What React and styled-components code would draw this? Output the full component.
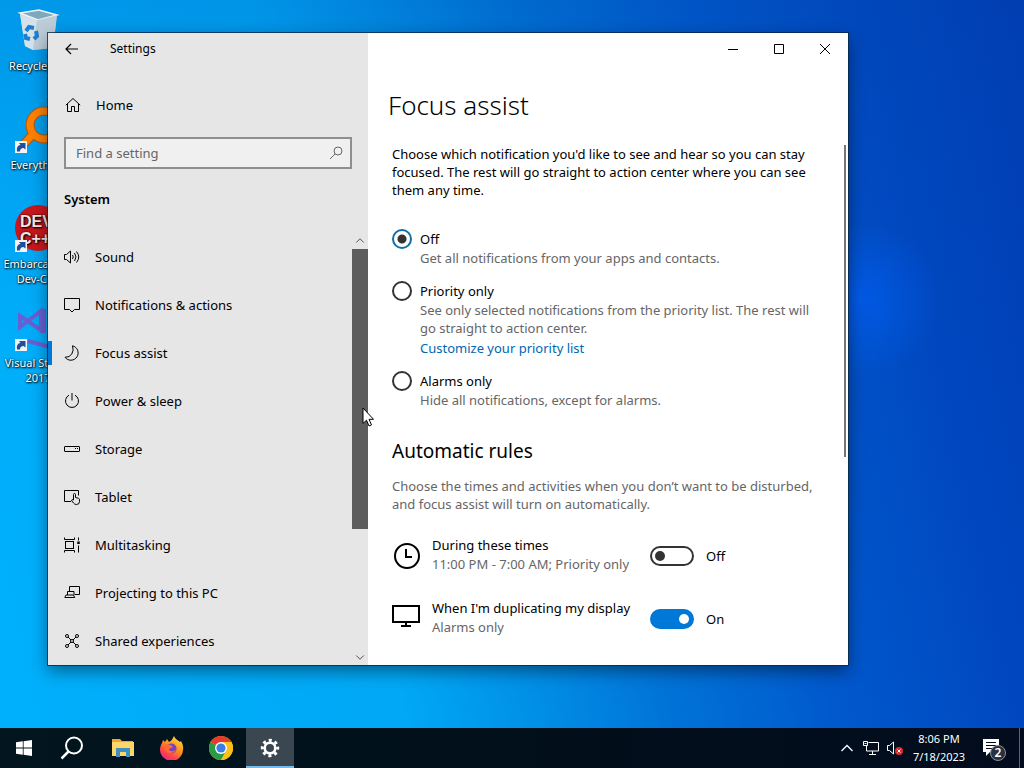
import { useState } from "react";
import styled, { createGlobalStyle } from "styled-components";

const GlobalStyle = createGlobalStyle`
  * {
    box-sizing: border-box;
  }

  body {
    margin: 0;
    font-family: "Noto Sans", "Open Sans", sans-serif;
    font-size: 13px;
    line-height: 18px;
    color: #000;
  }

  button,
  input {
    font: inherit;
    color: inherit;
  }

  svg {
    display: block;
    flex: none;
  }
`;

const Desktop = styled.div`
  position: relative;
  display: flex;
  flex-direction: column;
  height: 100vh;
  overflow: hidden;
  background: radial-gradient(
      circle at 84% 39%,
      rgba(0, 98, 250, 0.6),
      rgba(0, 98, 250, 0) 80px
    ),
    linear-gradient(180deg, rgba(0, 70, 170, 0.2), rgba(0, 70, 170, 0) 45%),
    linear-gradient(
      78deg,
      #00b0fc 0%,
      #00a8f6 35%,
      #0092e8 45%,
      #0074d8 57%,
      #0058cc 72%,
      #0048c0 86%,
      #003cb4 100%
    );
`;

const Shortcuts = styled.div`
  flex: 1;
  display: flex;
  flex-direction: column;
  align-items: flex-start;
  gap: 3px;
  padding: 6px 0;
`;

const Shortcut = styled.button`
  display: flex;
  flex-direction: column;
  align-items: center;
  gap: 4px;
  width: 76px;
  height: 96px;
  padding: 0;
  border: none;
  background: none;
  color: white;
  font-size: 11px;
  line-height: 15px;
  text-shadow: 1px 1px 2px #000, 0 0 2px #000;
`;

const Window = styled.main`
  position: absolute;
  top: 33px;
  right: 176px;
  bottom: 103px;
  left: 48px;
  display: grid;
  grid-template-columns: 320px 1fr;
  background: white;
  outline: 1px solid rgba(10, 40, 70, 0.8);
  box-shadow: 0 6px 16px rgba(0, 0, 0, 0.45);
`;

const Sidebar = styled.aside`
  display: flex;
  flex-direction: column;
  min-height: 0;
  background: #e6e6e6;
`;

const TitleBar = styled.div`
  display: flex;
  align-items: center;
  height: 32px;
  flex: none;
  font-size: 12px;
`;

const BackButton = styled.button`
  display: grid;
  place-items: center;
  width: 48px;
  height: 32px;
  margin-right: 14px;
  padding: 0;
  border: none;
  background: none;
`;

const HomeLink = styled.a`
  display: flex;
  align-items: center;
  gap: 15px;
  height: 48px;
  margin-top: 16px;
  padding-left: 17px;
  color: inherit;
  text-decoration: none;
`;

const SearchBox = styled.label`
  display: flex;
  align-items: center;
  height: 32px;
  margin: 8px 16px 0;
  padding: 0 6px 0 10px;
  border: 2px solid #8e8e8e;
  background: #f0f0f0;
  color: #666;
`;

const SearchInput = styled.input`
  flex: 1;
  min-width: 0;
  padding: 0;
  border: none;
  outline: none;
  background: none;

  &::placeholder {
    color: #666;
    opacity: 1;
  }
`;

const SectionName = styled.h2`
  margin: 0 0 4px;
  padding-left: 16px;
  font-size: 13px;
  font-weight: 600;
  line-height: 60px;
`;

const NavArea = styled.div`
  flex: 1;
  display: flex;
  min-height: 0;
`;

const NavList = styled.nav`
  flex: 1;
  overflow: hidden;
`;

const NavItem = styled.a`
  display: flex;
  align-items: center;
  gap: 15px;
  height: 48px;
  padding-left: 16px;
  background: ${(props) =>
    props.$active
      ? "linear-gradient(#0078d7, #0078d7) left center / 4px 24px no-repeat"
      : "none"};
  color: inherit;
  text-decoration: none;
`;

const ScrollBar = styled.div`
  display: flex;
  flex-direction: column;
  align-items: center;
  justify-content: space-between;
  width: 16px;
`;

const ScrollButton = styled.button`
  display: grid;
  place-items: center;
  width: 16px;
  height: 16px;
  padding: 0;
  border: none;
  background: none;
  color: #222;
`;

const ScrollTrack = styled.div`
  flex: 1;
  width: 100%;
`;

const ScrollThumb = styled.div`
  height: 70%;
  background: #5d5d5d;
`;

const Pane = styled.section`
  display: flex;
  flex-direction: column;
  min-width: 0;
  min-height: 0;
`;

const WindowButtons = styled.div`
  display: flex;
  justify-content: flex-end;
  flex: none;
`;

const WindowButton = styled.button`
  display: grid;
  place-items: center;
  width: 46px;
  height: 32px;
  padding: 0;
  border: none;
  background: none;
`;

const PageTitle = styled.h1`
  margin: 20px 0;
  padding-left: 20px;
  font-size: 26px;
  font-weight: 300;
  line-height: 40px;
`;

const PageArea = styled.div`
  flex: 1;
  display: flex;
  min-height: 0;
`;

const Page = styled.div`
  flex: 1;
  padding: 0 20px 0 24px;
  overflow: hidden;
`;

const PageScroll = styled.div`
  width: 2px;
  height: 60%;
  margin-right: 2px;
  background: #767676;
`;

const Text = styled.p`
  margin: 0;
  color: ${(props) => (props.$muted ? "#666" : "#000")};
`;

const Options = styled.div`
  display: flex;
  flex-direction: column;
  gap: 14px;
  margin-top: 30px;
`;

const Option = styled.div`
  display: grid;
  grid-template-columns: 20px 1fr;
  column-gap: 8px;
`;

const Radio = styled.input`
  appearance: none;
  width: 20px;
  height: 20px;
  margin: 0;
  border: 2px solid #333;
  border-radius: 50%;

  &:checked {
    border-color: #0f6fa8;
    background: radial-gradient(circle, #333 4px, transparent 5px);
  }
`;

const Label = styled.label`
  line-height: 20px;
`;

const OptionBody = styled.div`
  grid-column: 2;
`;

const TextLink = styled.a`
  display: inline-block;
  margin-top: 2px;
  color: #0066b4;
  text-decoration: none;
`;

const SectionTitle = styled.h2`
  margin: 28px 0 12px;
  font-size: 19px;
  font-weight: 400;
  line-height: 28px;
`;

const Rules = styled.div`
  display: flex;
  flex-direction: column;
  gap: 21px;
  margin-top: 22px;
`;

const Rule = styled.div`
  display: grid;
  grid-template-columns: 28px 206px 44px auto;
  justify-content: start;
  align-items: center;
  gap: 12px;
  height: 42px;
`;

const RuleText = styled.div`
  align-self: start;
  white-space: nowrap;
`;

const Toggle = styled.input`
  appearance: none;
  display: flex;
  align-items: center;
  width: 44px;
  height: 20px;
  margin: 0;
  padding: 0 3px;
  border: 2px solid #333;
  border-radius: 10px;

  &::before {
    content: "";
    width: 10px;
    height: 10px;
    border-radius: 50%;
    background: #333;
  }

  &:checked {
    justify-content: flex-end;
    border-color: #0078d7;
    background: #0078d7;
  }

  &:checked::before {
    background: white;
  }
`;

const Taskbar = styled.footer`
  display: flex;
  align-items: stretch;
  height: 40px;
  flex: none;
  background: linear-gradient(90deg, #02161f, #010e1a 60%, #020c1e);
  color: white;
`;

const TaskApps = styled.div`
  display: flex;
  gap: 1px;
  padding-left: 3px;
`;

const TaskButton = styled.button`
  display: grid;
  place-items: center;
  width: 48px;
  padding: 0;
  border: none;
  background: ${(props) => (props.$active ? "#3a4751" : "none")};
  box-shadow: ${(props) => (props.$active ? "inset 0 -2px #76b9ed" : "none")};
`;

const Tray = styled.div`
  display: flex;
  align-items: center;
  margin-left: auto;
`;

const TrayButton = styled.button`
  display: grid;
  place-items: center;
  width: 24px;
  height: 40px;
  padding: 0;
  border: none;
  background: none;
`;

const Clock = styled.button`
  width: 64px;
  padding: 0;
  border: none;
  background: none;
  font-size: 11px;
  line-height: 18px;
`;

const NoticeButton = styled(TrayButton)`
  width: 48px;
`;

const ShowDesktop = styled.button`
  width: 5px;
  height: 40px;
  padding: 0;
  border: none;
  border-left: 1px solid #5a6470;
  background: none;
`;

const Cursor = styled.svg`
  position: absolute;
  top: 407px;
  left: 362px;
`;

function Icon({ size = 16, children }) {
  return (
    <svg
      width={size}
      height={size}
      viewBox="0 0 16 16"
      fill="none"
      stroke="currentColor"
      aria-hidden="true"
    >
      {children}
    </svg>
  );
}

function ShortcutArrow() {
  return (
    <g>
      <rect x="1" y="36" width="12" height="12" fill="#f4f4f4" />
      <path d="M3 46.500q-1-6 3.500-6.500L5 38h6.500v6.500L9.500 43q-3.500 0-3.500 3.500z" fill="#1d4f9c" />
    </g>
  );
}

function RecycleBinIcon() {
  return (
    <svg width="48" height="48" viewBox="0 0 48 48" aria-hidden="true">
      <path d="M6 7l19-3 18 5-4 33-20 2-8-4z" fill="#c3d3dd" />
      <path d="M6 7l19-3 18 5-19 5z" fill="#7fa7be" stroke="#edf4f8" strokeWidth="1.500" />
      <path d="M6 8l5 32 8 4 4-30z" fill="#d6e2ea" />
      <path d="M23 14l20-5-4 33-20 2z" fill="#b9cad6" opacity=".7" />
      <g fill="none" stroke="#1c7fd0" strokeWidth="4">
        <path d="M12 25l3-4 5 1" />
        <path d="M22 25l1 5-3 3" />
        <path d="M16 33l-4-1-1-4" />
      </g>
    </svg>
  );
}

function EverythingIcon() {
  return (
    <svg width="48" height="48" viewBox="0 0 48 48" aria-hidden="true">
      <path d="M19 29L9 40" stroke="#b0560c" strokeWidth="9" />
      <circle cx="30" cy="20" r="14" fill="none" stroke="#b0560c" strokeWidth="9" />
      <circle cx="30" cy="20" r="14" fill="none" stroke="#ff8000" strokeWidth="7" />
      <path d="M20 28L9 40" stroke="#ff8000" strokeWidth="7" />
      <ShortcutArrow />
    </svg>
  );
}

function DevIcon() {
  return (
    <svg width="48" height="48" viewBox="0 0 48 48" aria-hidden="true">
      <circle cx="24" cy="24" r="23" fill="#c8171c" />
      <g fill="#f6e4e4" fontFamily="Liberation Sans" fontWeight="700" fontSize="16">
        <text x="6" y="23">DEV</text>
        <text x="6" y="40">C++</text>
      </g>
      <ShortcutArrow />
    </svg>
  );
}

function StudioIcon() {
  return (
    <svg width="48" height="48" viewBox="0 0 48 48" aria-hidden="true">
      <g fill="none" stroke="#7d52cc" opacity=".85">
        <path d="M6 13l21 14V8L6 24z" strokeWidth="4" />
        <path d="M29 6v24" strokeWidth="6" />
        <path d="M14 38l22 6" strokeWidth="4" />
      </g>
      <ShortcutArrow />
    </svg>
  );
}

const shortcuts = [
  { label: "Recycle Bin", icon: <RecycleBinIcon /> },
  { label: "Everything", icon: <EverythingIcon /> },
  { label: "Embarcadero Dev-C++", icon: <DevIcon /> },
  { label: "Visual Studio 2017", icon: <StudioIcon /> },
];

const navItems = [
  {
    label: "Sound",
    icon: (
      <>
        <path d="M.5 5.500h2l4-3.500v12l-4-3.500h-2z" />
        <path d="M8.500 6q1.500 2 0 4M10.500 4q3 4 0 8M12.500 2.500q4.500 5.500 0 11" />
      </>
    ),
  },
  {
    label: "Notifications & actions",
    icon: <path d="M.5 1.500h15v11h-5l-2.500 2.500-2.500-2.500h-5z" />,
  },
  {
    label: "Focus assist",
    active: true,
    icon: <path d="M8.500.8A7.300 7.300 0 1 1 1 12.300Q5.500 12.500 7.800 9T8.500.8z" />,
  },
  {
    label: "Power & sleep",
    icon: <path d="M8 0v7.500M5 2.200a6.500 6.500 0 1 0 6 0" />,
  },
  {
    label: "Storage",
    icon: (
      <>
        <rect x=".5" y="5.500" width="15" height="5" rx=".5" />
        <path d="M11 7.500h1M13 7.500h1" />
      </>
    ),
  },
  {
    label: "Tablet",
    icon: (
      <>
        <path d="M7 12.500H.5v-11h14v5" />
        <path d="M9.500 11V5.500q0-1 1-1t1 1V8.500l3 .8q1 .3 1 1.500v1.700q0 3-3 3-2 0-3-1.500L7.500 11.500q0-1.500 2-.5" />
      </>
    ),
  },
  {
    label: "Multitasking",
    icon: (
      <>
        <rect x="1.500" y="4.500" width="8" height="7" />
        <path d="M.5 .5v2h10v-2M.5 15.500v-2h10v2M14.500 .5v3M14.500 8.500v7" />
        <path d="M14.500 4.500v2.500" strokeWidth="2.500" />
      </>
    ),
  },
  {
    label: "Projecting to this PC",
    icon: (
      <>
        <path d="M5.500 6V1.500h10v8H11" />
        <path d="M3.500 10V6.500h6.500V10M.8 12.500h9.900l-1.200-2.500H2z" />
      </>
    ),
  },
  {
    label: "Shared experiences",
    icon: (
      <>
        <circle cx="3" cy="3" r="1.500" />
        <circle cx="13" cy="3" r="1.500" />
        <circle cx="3" cy="13" r="1.500" />
        <circle cx="13" cy="13" r="1.500" />
        <circle cx="8" cy="8" r="1.500" />
        <path d="M4 4l3 3M12 4L9 7M4 12l3-3M12 12L9 9" />
      </>
    ),
  },
];

const options = [
  { id: "off", label: "Off", text: "Get all notifications from your apps and contacts." },
  {
    id: "priority",
    label: "Priority only",
    text: "See only selected notifications from the priority list. The rest will go straight to action center.",
    link: "Customize your priority list",
  },
  { id: "alarms", label: "Alarms only", text: "Hide all notifications, except for alarms." },
];

function RuleRow({ id, title, text, icon, initial }) {
  const [on, setOn] = useState(initial);
  return (
    <Rule>
      {icon}
      <RuleText>
        <Label htmlFor={id}>{title}</Label>
        <Text $muted>{text}</Text>
      </RuleText>
      <Toggle
        id={id}
        type="checkbox"
        role="switch"
        checked={on}
        onChange={(e) => setOn(e.target.checked)}
      />
      <span>{on ? "On" : "Off"}</span>
    </Rule>
  );
}

function ClockIcon() {
  return (
    <svg width="28" height="28" viewBox="0 0 28 28" fill="none" stroke="#000" strokeWidth="2" aria-hidden="true">
      <circle cx="15" cy="14" r="12" />
      <path d="M14 7v8h6" />
    </svg>
  );
}

function DisplayIcon() {
  return (
    <svg width="28" height="28" viewBox="0 0 28 28" fill="none" stroke="#000" strokeWidth="2" aria-hidden="true">
      <path d="M1 1h26v16H1zM14 17v4M9 21h10" />
    </svg>
  );
}

function ExplorerIcon() {
  return (
    <svg width="22" height="20" viewBox="0 0 22 20" aria-hidden="true">
      <path d="M0 1h8l2 2h11v15H0z" fill="#e8a92e" />
      <path d="M0 4h22v14H0z" fill="#fcd668" />
      <path d="M4 10h14v9h-4v-5H8v5H4z" fill="#3f8fc0" />
    </svg>
  );
}

function FirefoxIcon() {
  return (
    <svg width="24" height="24" viewBox="0 0 24 24" aria-hidden="true">
      <defs>
        <linearGradient id="fox" x1=".8" y1="0" x2=".2" y2="1">
          <stop offset="0" stopColor="#ffe23c" />
          <stop offset=".45" stopColor="#ff8a1e" />
          <stop offset=".75" stopColor="#ff4052" />
          <stop offset="1" stopColor="#e8208c" />
        </linearGradient>
      </defs>
      <path
        d="M14 0c1 3 4 4 6 6l1-1c2 4 2.500 6 2 9A11.500 11.500 0 1 1 2 7l1-3 2 2 2-3 2 3c2-1 3-2 5-6z"
        fill="url(#fox)"
      />
      <circle cx="11.500" cy="12.500" r="5" fill="#7340c8" />
      <path d="M5 8l6 1 2 2-4 2c1 3 5 3 7 0-1 5-9 6-11 0z" fill="#ff6a30" />
    </svg>
  );
}

function ChromeIcon() {
  return (
    <svg width="24" height="24" viewBox="0 0 24 24" aria-hidden="true">
      <circle cx="12" cy="12" r="12" fill="#fbc116" />
      <path d="M12 12L1.600 6A12 12 0 0 0 12 24l5.200-9z" fill="#2a9c48" />
      <path d="M12 12L1.600 6a12 12 0 0 1 20.800 0z" fill="#e33b2e" />
      <path d="M22.400 6H12v2l5 4 0 3-5 9A12 12 0 0 0 22.400 6z" fill="#fbc116" />
      <circle cx="12" cy="12" r="6" fill="white" />
      <circle cx="12" cy="12" r="4.600" fill="#3a7ee8" />
    </svg>
  );
}

function GearIcon() {
  return (
    <svg width="20" height="20" viewBox="0 0 20 20" fill="none" stroke="white" aria-hidden="true">
      <circle cx="10" cy="10" r="5.300" strokeWidth="2.600" />
      <circle cx="10" cy="10" r="7.700" strokeWidth="3" strokeDasharray="3 3.047" strokeDashoffset="1.500" />
    </svg>
  );
}

export default function App() {
  const [mode, setMode] = useState("off");
  const [query, setQuery] = useState("");

  return (
    <>
      <GlobalStyle />
      <Desktop>
        <Shortcuts>
          {shortcuts.map((item) => (
            <Shortcut key={item.label} type="button">
              {item.icon}
              {item.label}
            </Shortcut>
          ))}
        </Shortcuts>

        <Window>
          <Sidebar>
            <TitleBar>
              <BackButton type="button" aria-label="Back">
                <Icon>
                  <path d="M2 8h12M7 3L2 8l5 5" strokeWidth="1.200" />
                </Icon>
              </BackButton>
              Settings
            </TitleBar>
            <HomeLink href="#home">
              <Icon>
                <path d="M.8 8.200L8 1.500l7.200 6.700M2.500 7v7.500h4v-5h3v5h4V7" />
              </Icon>
              Home
            </HomeLink>
            <SearchBox>
              <SearchInput
                type="text"
                aria-label="Find a setting"
                placeholder="Find a setting"
                value={query}
                onChange={(e) => setQuery(e.target.value)}
              />
              <Icon>
                <circle cx="10" cy="6" r="4" />
                <path d="M7 9l-5 5" />
              </Icon>
            </SearchBox>
            <SectionName>System</SectionName>
            <NavArea>
              <NavList>
                {navItems.map((item) => (
                  <NavItem key={item.label} href="#" $active={item.active}>
                    <Icon>{item.icon}</Icon>
                    {item.label}
                  </NavItem>
                ))}
              </NavList>
              <ScrollBar>
                <ScrollButton type="button" aria-label="Scroll up">
                  <Icon size={12}>
                    <path d="M3 10l5-5 5 5" />
                  </Icon>
                </ScrollButton>
                <ScrollTrack>
                  <ScrollThumb />
                </ScrollTrack>
                <ScrollButton type="button" aria-label="Scroll down">
                  <Icon size={12}>
                    <path d="M3 6l5 5 5-5" />
                  </Icon>
                </ScrollButton>
              </ScrollBar>
            </NavArea>
          </Sidebar>

          <Pane>
            <WindowButtons>
              <WindowButton type="button" aria-label="Minimize">
                <Icon>
                  <path d="M3 8.500h10" />
                </Icon>
              </WindowButton>
              <WindowButton type="button" aria-label="Maximize">
                <Icon>
                  <path d="M3.500 3.500h9v9h-9z" />
                </Icon>
              </WindowButton>
              <WindowButton type="button" aria-label="Close">
                <Icon>
                  <path d="M3 3l10 10M13 3L3 13" />
                </Icon>
              </WindowButton>
            </WindowButtons>
            <PageTitle>Focus assist</PageTitle>
            <PageArea>
              <Page>
                <Text>
                  Choose which notification you'd like to see and hear so you can stay
                  focused. The rest will go straight to action center where you can see
                  them any time.
                </Text>
                <Options>
                  {options.map((option) => (
                    <Option key={option.id}>
                      <Radio
                        type="radio"
                        name="mode"
                        id={option.id}
                        checked={mode === option.id}
                        onChange={() => setMode(option.id)}
                      />
                      <Label htmlFor={option.id}>{option.label}</Label>
                      <OptionBody>
                        <Text $muted>{option.text}</Text>
                        {option.link && <TextLink href="#list">{option.link}</TextLink>}
                      </OptionBody>
                    </Option>
                  ))}
                </Options>
                <SectionTitle>Automatic rules</SectionTitle>
                <Text $muted>
                  Choose the times and activities when you don’t want to be disturbed,
                  and focus assist will turn on automatically.
                </Text>
                <Rules>
                  <RuleRow
                    id="times"
                    title="During these times"
                    text="11:00 PM - 7:00 AM; Priority only"
                    icon={<ClockIcon />}
                    initial={false}
                  />
                  <RuleRow
                    id="display"
                    title="When I'm duplicating my display"
                    text="Alarms only"
                    icon={<DisplayIcon />}
                    initial={true}
                  />
                </Rules>
              </Page>
              <PageScroll />
            </PageArea>
          </Pane>
        </Window>

        <Taskbar>
          <TaskButton type="button" aria-label="Start">
            <svg width="16" height="16" viewBox="0 0 16 16" fill="white" aria-hidden="true">
              <path d="M0 2.300l6.800-1v6.300H0zM7.600 1.200L16 0v7.600H7.600zM0 8.400h6.800v6.300l-6.800-1zM7.600 8.400H16V16l-8.400-1.200z" />
            </svg>
          </TaskButton>
          <TaskButton type="button" aria-label="Search">
            <svg width="24" height="24" viewBox="0 0 24 24" fill="none" stroke="white" strokeWidth="2" aria-hidden="true">
              <circle cx="14" cy="9.500" r="8" />
              <path d="M8.500 15.500l-7 7" strokeWidth="2.500" />
            </svg>
          </TaskButton>
          <TaskApps>
            <TaskButton type="button" aria-label="File Explorer">
              <ExplorerIcon />
            </TaskButton>
            <TaskButton type="button" aria-label="Firefox">
              <FirefoxIcon />
            </TaskButton>
            <TaskButton type="button" aria-label="Chrome">
              <ChromeIcon />
            </TaskButton>
            <TaskButton type="button" aria-label="Settings" $active>
              <GearIcon />
            </TaskButton>
          </TaskApps>
          <Tray>
            <TrayButton type="button" aria-label="Show hidden icons">
              <Icon>
                <path d="M2.500 11L8 5.500l5.500 5.500" strokeWidth="1.300" />
              </Icon>
            </TrayButton>
            <TrayButton type="button" aria-label="Network">
              <Icon>
                <path d="M5.500 2.500h10v8.500H3.500V6M9.500 11v3.500M6 14.500h7M.5 1.500h4v4h-4zM1.500 3.500h2" />
              </Icon>
            </TrayButton>
            <TrayButton type="button" aria-label="Volume">
              <Icon>
                <path d="M.5 5.500h2l4-3.500v12l-4-3.500h-2z" />
                <circle cx="12" cy="11" r="4" fill="#d92b2b" stroke="none" />
                <path d="M10.500 9.500l3 3M13.500 9.500l-3 3" />
              </Icon>
            </TrayButton>
            <Clock type="button">
              8:06 PM
              <br />
              7/18/2023
            </Clock>
            <NoticeButton type="button" aria-label="2 new notifications">
              <svg width="26" height="26" viewBox="0 0 26 26" aria-hidden="true">
                <path d="M1 4h16v13h-9l-4 4v-4H1z" fill="white" />
                <path d="M4 7.500h10M4 10.500h10M4 13.500h6" stroke="#020c1e" />
                <circle cx="16" cy="18" r="7.500" fill="#27303c" stroke="#8a929c" />
                <text x="16" y="22" fill="white" fontSize="12" fontWeight="600" textAnchor="middle">
                  2
                </text>
              </svg>
            </NoticeButton>
            <ShowDesktop type="button" aria-label="Show desktop" />
          </Tray>
        </Taskbar>

        <Cursor width="12" height="20" viewBox="0 0 12 20" aria-hidden="true">
          <path d="M1 1v15.500l3.500-3.300 2.500 5.800 2.500-1.100-2.500-5.600h4.500z" fill="white" stroke="black" />
        </Cursor>
      </Desktop>
    </>
  );
}
